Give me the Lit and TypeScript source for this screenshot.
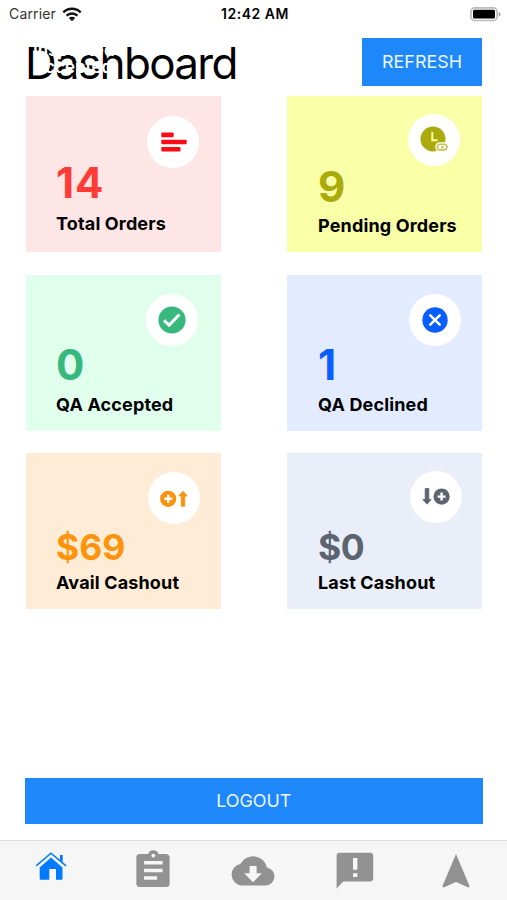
import { LitElement, html, css, svg } from "lit";
import { customElement } from "lit/decorators.js";

const cross = (cx: number, cy: number) =>
  svg`<path d="M${cx - 4} ${cy}H${cx + 4}M${cx} ${cy - 4}V${cy + 4}" stroke="#fff" stroke-width="2.4" fill="none"/>`;

const icons: Record<string, unknown> = {
  total: svg`<g fill="#fb0d17"><rect x="14.3" y="16.6" width="12.4" height="4.6" rx="1"/><rect x="14.3" y="23.8" width="25.4" height="4.4" rx="1"/><rect x="14.3" y="30.9" width="19.2" height="4.5" rx="1"/></g>`,
  pending: svg`<circle cx="25" cy="25" r="12.5" fill="#abaa0c"/><path d="M24.3 18V26.2H29.5" stroke="#f7ffa9" stroke-width="2" fill="none"/><rect x="27.2" y="28.2" width="13.4" height="9.6" rx="4.8" fill="#fff"/><rect x="29.3" y="30.3" width="9.6" height="5.6" rx="2.8" fill="#fff" stroke="#c3c250" stroke-width="1.6"/><path d="M33 33.2h2.6" stroke="#c3c250" stroke-width="2"/>`,
  accepted: svg`<circle cx="26" cy="26" r="13.6" fill="#37b87c"/><path d="M18 26.3l5.2 4.8L33.4 20.5" stroke="#fff" stroke-width="3" fill="none"/>`,
  declined: svg`<circle cx="26" cy="26" r="12.7" fill="#0a5dff"/><path d="M21.3 21.3l9.4 9.4M30.7 21.3l-9.4 9.4" stroke="#fff" stroke-width="2.5" stroke-linecap="round"/>`,
  avail: svg`<circle cx="20.2" cy="26.8" r="8.1" fill="#f8930f"/>${cross(20.2, 26.8)}<path d="M35 19.2l4.2 4.8h-2.4v10.3h-3.6V24h-2.4z" fill="#f8930f" stroke="#f8930f" stroke-width=".8" stroke-linejoin="round"/>`,
  last: svg`<circle cx="31.6" cy="25.6" r="8.1" fill="#5c6470"/>${cross(31.6, 25.6)}<path d="M17 33.2l-4.2-4.8h2.4V17.5h3.6v10.9h2.4z" fill="#5c6470" stroke="#5c6470" stroke-width=".8" stroke-linejoin="round"/>`,
};

const cards = [
  { id: "total", value: "14", label: "Total Orders" },
  { id: "pending", value: "9", label: "Pending Orders" },
  { id: "accepted", value: "0", label: "QA Accepted" },
  { id: "declined", value: "1", label: "QA Declined" },
  { id: "avail", value: "$69", label: "Avail Cashout" },
  { id: "last", value: "$0", label: "Last Cashout" },
];

const tabs = [
  svg`<g fill="#007bff" transform="translate(2 0)"><path d="M11.7 30.5V19.4L23 9.4l11.5 10v11.1q0 1.2-1.2 1.2H28V21h-6.7v10.7h-8.4q-1.2 0-1.2-1.2z"/><path d="M8.1 17.8L23 5.2l15 12.6" fill="none" stroke="#007bff" stroke-width="1.6"/><path d="M32 7h2.7v7.3L32 12z"/></g>`,
  svg`<path transform="translate(.6 -.2) scale(1.03 1)" fill="#929292" fill-rule="evenodd" d="M37 6.1h-6.9a5.4 5.4 0 0 0-10.2 0H12a3.6 3.6 0 0 0-3.5 3.6v26a3.6 3.6 0 0 0 3.5 3.6h25.3a3.6 3.6 0 0 0 3.5-3.6v-26A3.6 3.6 0 0 0 37 6.1zM25 5.9a1.9 1.9 0 1 1 0 3.8 1.9 1.9 0 0 1 0-3.8zM16 13.3h18v3.5H16zM16 21h18v3.5H16zM16 28.5h12.6V32H16z"/>`,
  svg`<path fill="#929292" fill-rule="evenodd" d="M39 19.4a14.2 14.2 0 0 0-26.4-3.6A11 11 0 0 0 14 37.6h24a9.2 9.2 0 0 0 1-18.2zM21.6 18h7v7.2h5.3L25 34.3l-8.8-9.1h5.4z"/>`,
  svg`<path fill="#929292" fill-rule="evenodd" d="M10 4.8h30a3.2 3.2 0 0 1 3.2 3.2v22.3a3.2 3.2 0 0 1-3.2 3.2H13.3L6.6 40.6V8A3.2 3.2 0 0 1 10 4.8zM23 10v11.8h4.4V10zM23 25.3V29h4.4v-3.7z"/>`,
  svg`<path fill="#929292" d="M25 6L38.7 38.4l-1.2 1.2L25 33.9l-12.5 5.7-1.2-1.2z"/>`,
];

@customElement("app-root")
export class AppRoot extends LitElement {
  static styles = css`
    :host {
      display: flex;
      flex-direction: column;
      width: 507px;
      height: 900px;
      overflow: hidden;
      background: #fff;
      color: #000;
      font-family: Inter, "Liberation Sans", sans-serif;
    }
    * { box-sizing: border-box; }
    svg { display: block; }
    .status {
      display: grid;
      grid-template-columns: 1fr auto 1fr;
      align-items: center;
      height: 28px;
      padding: 0 6px 0 9px;
      font-size: 14px;
      line-height: 28px;
    }
    .carrier { display: flex; align-items: center; gap: 6px; color: #333; letter-spacing: 0.15px; }
    .time { font-weight: 600; font-size: 14px; letter-spacing: 0.5px; }
    .battery { justify-self: end; }
    .head {
      position: relative;
      display: flex;
      justify-content: space-between;
      height: 68px;
      padding: 10px 25px 10px 25px;
    }
    .title {
      margin: 0;
      font-size: 44px;
      font-weight: 400;
      line-height: 50px;
      letter-spacing: -1.7px;
      white-space: nowrap;
    }
    .ghost {
      position: absolute;
      left: 33px;
      top: 14px;
      color: #fff;
      font-size: 17px;
      font-weight: 600;
      line-height: 17px;
      white-space: nowrap;
    }
    .btn {
      display: flex;
      align-items: center;
      justify-content: center;
      border: 0;
      padding: 0;
      background: #1e88fb;
      color: #eaf6ff;
      font: 400 17.9px/24px Inter, "Liberation Sans", sans-serif;
    }
    .refresh { width: 120px; height: 48px; }
    .grid {
      display: grid;
      grid-template-columns: 195px 195px;
      column-gap: 66px;
      row-gap: 22.5px;
      padding-left: 26px;
    }
    .card {
      display: flex;
      flex-direction: column;
      justify-content: space-between;
      height: 156px;
      padding-left: 31px;
    }
    .card:nth-child(odd) { padding-left: 30px; }
    .badge {
      align-self: flex-end;
      flex: none;
      width: 52px;
      height: 52px;
      border-radius: 50%;
      background: #fff;
    }
    .info { display: flex; flex-direction: column; gap: 15.5px; }
    .value { font-size: 42px; line-height: 28px; font-weight: 700; white-space: nowrap; }
    .label { font-size: 18px; line-height: 20px; font-weight: 650; letter-spacing: 0.15px; white-space: nowrap; }
    .total { background: #ffe6e6; padding-top: 20px; padding-right: 22px; padding-bottom: 18px; }
    .total .value { color: #fe3b35; letter-spacing: 1px; }
    .total .info { gap: 17px; }
    .pending { background: #f8ffa7; padding-top: 18px; padding-right: 22px; padding-bottom: 16px; }
    .pending .value { color: #abaa0c; }
    .accepted { background: #e0ffed; padding-top: 19px; padding-right: 23px; padding-bottom: 16px; }
    .accepted .value { color: #37b87c; }
    .declined { background: #e2ebff; padding-top: 19px; padding-right: 21px; padding-bottom: 16px; }
    .declined .value { color: #0a5dff; }
    .avail { background: #ffecd7; padding-top: 19px; padding-right: 21px; padding-bottom: 16px; }
    .avail .value { color: #ff940c; }
    .last { background: #e9eef9; padding-top: 18px; padding-right: 20px; padding-bottom: 16px; }
    .last .value { color: #5c6470; letter-spacing: -0.5px; }
    .avail .value, .last .value { font-size: 35.5px; font-weight: 650; }
    .avail .info, .last .info { gap: 11px; }
    .logout { width: 457.5px; height: 46px; margin: auto 0 16px 25px; flex: none; }
    .tabs {
      display: grid;
      grid-template-columns: repeat(5, 1fr);
      justify-items: center;
      height: 60px;
      flex: none;
      padding-top: 7px;
      border-top: 1px solid #dedede;
      background: #f6f6f6;
    }
  `;

  render() {
    return html`
      <div class="status">
        <div class="carrier">
          <span>Carrier</span>
          <svg width="20" height="15" viewBox="0 0 20 15">
            <g fill="none" stroke="#111" stroke-width="2.4">
              <path d="M1.3 5.3a12.6 12.6 0 0 1 17.4 0" />
              <path d="M4.5 8.7a8 8 0 0 1 11 0" />
            </g>
            <path d="M6.8 11a4.6 4.6 0 0 1 6.4 0L10 14.3z" fill="#111" />
          </svg>
        </div>
        <div class="time">12:42 AM</div>
        <svg class="battery" width="31" height="15" viewBox="0 0 31 15">
          <rect x=".9" y=".9" width="26.2" height="12.6" rx="3.8" fill="#fff" stroke="#bdbdbd" stroke-width="1.7" />
          <rect x="3" y="2.8" width="22" height="8.8" rx="1.5" fill="#000" />
          <path d="M28.6 5v4.4q2-.5 2-2.2t-2-2.2z" fill="#aaa" />
        </svg>
      </div>
      <div class="head">
        <h1 class="title">Dashboard</h1>
        <div class="ghost">Inspected<br />Accepted</div>
        <button class="btn refresh">REFRESH</button>
      </div>
      <div class="grid">
        ${cards.map(
          (c) => html`<div class="card ${c.id}">
            <div class="badge"><svg width="52" height="52" viewBox="0 0 52 52">${icons[c.id]}</svg></div>
            <div class="info">
              <div class="value">${c.value}</div>
              <div class="label">${c.label}</div>
            </div>
          </div>`
        )}
      </div>
      <button class="btn logout">LOGOUT</button>
      <div class="tabs">
        ${tabs.map((t) => html`<svg width="50" height="44" viewBox="0 0 50 44">${t}</svg>`)}
      </div>
    `;
  }
}
